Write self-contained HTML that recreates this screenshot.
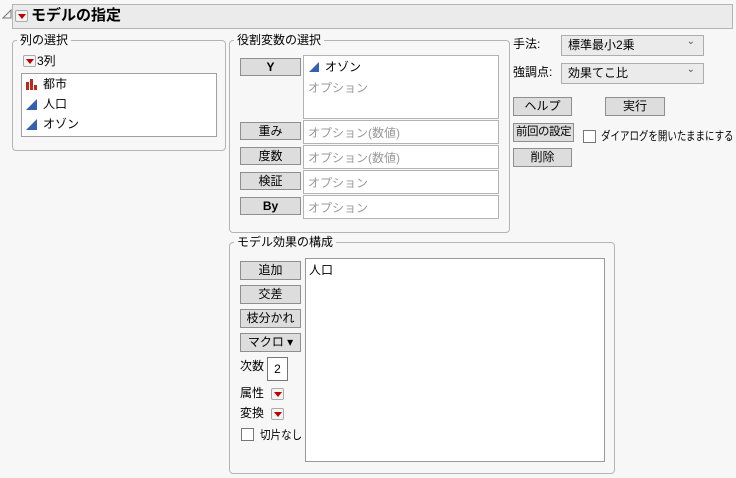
<!DOCTYPE html>
<html><head><meta charset="utf-8"><style>
*{box-sizing:border-box;margin:0;padding:0}
body{width:736px;height:478px;background:#f7f7f7;font-family:"Liberation Sans","Noto Sans CJK JP",sans-serif;font-size:12px;color:#000;position:relative;overflow:hidden;white-space:nowrap}
.a{position:absolute}
.grp{position:absolute;border:1px solid #b4b4b4;border-radius:4px}
.lg{position:absolute;background:#f7f7f7;padding:0 3px;font-size:12px;line-height:14px;top:-8px;left:4px}
.btn{position:absolute;background:#dddddd;border:1px solid #8f8f8f;text-align:center;font-size:12px;line-height:16px;overflow:visible}
.box{position:absolute;background:#fff;border:1px solid #b4b4b4}
.ph{color:#999;font-size:12px}
.rb{position:absolute;width:13px;height:12px;border:1px solid #aaa;border-radius:2px;background:#f4f4f4}
.rb:after{content:"";position:absolute;left:2px;top:3px;border-left:4px solid transparent;border-right:4px solid transparent;border-top:5px solid #c00000}
.cb{position:absolute;width:13px;height:13px;border:1px solid #555;background:#fff}
.dd{position:absolute;background:#ebebeb;border:1px solid #adadad;font-size:12px;line-height:18px;padding-left:6px}
.dd:after{content:"⌄";position:absolute;right:8px;top:-3px;font-size:10px;color:#555}
</style></head><body>
<svg class="a" style="left:2px;top:9px" width="10" height="10"><path d="M1 9 L9 9 L9 1 Z" fill="none" stroke="#777"/></svg>
<div class="a" style="left:12px;top:4px;width:721px;height:25px;background:#ebebeb;border:1px solid #b4b4b4"></div>
<div class="rb" style="left:15px;top:10px"></div>
<div class="a" style="left:31px;top:6px;font-size:15px;font-weight:bold;line-height:20px">モデルの指定</div>

<div class="grp" style="left:12px;top:40px;width:214px;height:111px"><div class="lg">列の選択</div></div>
<div class="rb" style="left:23px;top:55px"></div>
<div class="a" style="left:37px;top:54px;line-height:14px">3列</div>
<div class="box" style="left:21px;top:73px;width:196px;height:64px;border-color:#a0a0a0"></div>
<svg class="a" style="left:26px;top:79px" width="12" height="11"><rect x="0" y="3" width="3" height="8" fill="#c0281b"/><rect x="4" y="0" width="3" height="11" fill="#c0281b"/><rect x="8" y="6" width="3" height="5" fill="#c0281b"/></svg>
<div class="a" style="left:43px;top:76px;line-height:16px">都市</div>
<svg class="a" style="left:26px;top:99px" width="12" height="11"><path d="M0 11 L11 0 L11 11 Z" fill="#3360b0"/></svg>
<div class="a" style="left:43px;top:96px;line-height:16px">人口</div>
<svg class="a" style="left:26px;top:119px" width="12" height="11"><path d="M0 11 L11 0 L11 11 Z" fill="#3360b0"/></svg>
<div class="a" style="left:43px;top:116px;line-height:16px">オゾン</div>

<div class="grp" style="left:229px;top:40px;width:281px;height:193px"><div class="lg">役割変数の選択</div></div>
<div class="btn" style="left:240px;top:58px;width:61px;height:18px;font-weight:bold">Y</div>
<div class="box" style="left:303px;top:55px;width:196px;height:64px"></div>
<svg class="a" style="left:309px;top:62px" width="11" height="10"><path d="M0 10 L10 0 L10 10 Z" fill="#3360b0"/></svg>
<div class="a" style="left:325px;top:59px;line-height:16px">オゾン</div>
<div class="a ph" style="left:308px;top:80px;line-height:16px">オプション</div>
<div class="btn" style="left:240px;top:122px;width:61px;height:18px">重み</div>
<div class="box" style="left:303px;top:120px;width:196px;height:24px"><span class="a ph" style="left:4px;top:3px">オプション(数値)</span></div>
<div class="btn" style="left:240px;top:147px;width:61px;height:18px">度数</div>
<div class="box" style="left:303px;top:145px;width:196px;height:24px"><span class="a ph" style="left:4px;top:3px">オプション(数値)</span></div>
<div class="btn" style="left:240px;top:172px;width:61px;height:18px">検証</div>
<div class="box" style="left:303px;top:170px;width:196px;height:24px"><span class="a ph" style="left:4px;top:3px">オプション</span></div>
<div class="btn" style="left:240px;top:197px;width:61px;height:18px;font-weight:bold">By</div>
<div class="box" style="left:303px;top:195px;width:196px;height:24px"><span class="a ph" style="left:4px;top:3px">オプション</span></div>

<div class="a" style="left:513px;top:36px;line-height:16px">手法:</div>
<div class="dd" style="left:561px;top:35px;width:143px;height:21px">標準最小2乗</div>
<div class="a" style="left:513px;top:64px;line-height:16px">強調点:</div>
<div class="dd" style="left:561px;top:63px;width:143px;height:21px">効果てこ比</div>
<div class="btn" style="left:513px;top:97px;width:59px;height:19px">ヘルプ</div>
<div class="btn" style="left:605px;top:97px;width:60px;height:19px">実行</div>
<div class="btn" style="left:513px;top:123px;width:61px;height:19px;font-size:11.5px;letter-spacing:-0.5px">前回の設定</div>
<div class="cb" style="left:583px;top:130px;border-color:#777"></div>
<div class="a" style="left:601px;top:128px;line-height:16px;transform:scaleX(0.79);transform-origin:0 0">ダイアログを開いたままにする</div>
<div class="btn" style="left:513px;top:148px;width:59px;height:19px">削除</div>

<div class="grp" style="left:229px;top:242px;width:386px;height:232px"><div class="lg">モデル効果の構成</div></div>
<div class="btn" style="left:240px;top:261px;width:61px;height:19px">追加</div>
<div class="btn" style="left:240px;top:285px;width:61px;height:19px">交差</div>
<div class="btn" style="left:240px;top:309px;width:61px;height:19px">枝分かれ</div>
<div class="btn" style="left:240px;top:333px;width:61px;height:19px">マクロ ▾</div>
<div class="a" style="left:240px;top:358px;line-height:16px">次数</div>
<div class="box" style="left:267px;top:357px;width:21px;height:24px;border-color:#777;text-align:center;line-height:22px">2</div>
<div class="a" style="left:240px;top:385px;line-height:16px">属性</div>
<div class="rb" style="left:271px;top:388px"></div>
<div class="a" style="left:240px;top:405px;line-height:16px">変換</div>
<div class="rb" style="left:271px;top:408px"></div>
<div class="cb" style="left:241px;top:428px;border-color:#777"></div>
<div class="a" style="left:260px;top:427px;line-height:16px;transform:scaleX(0.88);transform-origin:0 0">切片なし</div>
<div class="box" style="left:305px;top:258px;width:300px;height:204px;border-color:#999"></div>
<div class="a" style="left:309px;top:262px;line-height:16px">人口</div>
</body></html>
